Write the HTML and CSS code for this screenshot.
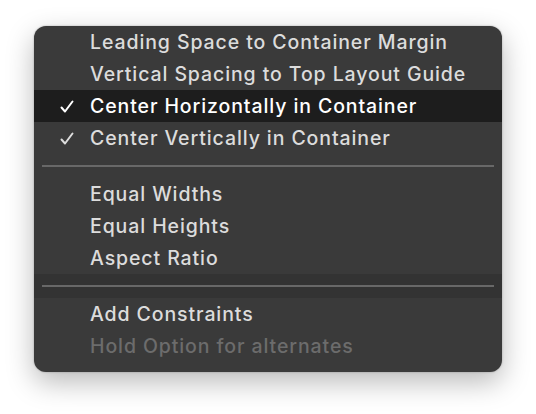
FILE: index.html
```html
<!DOCTYPE html>
<html>
<head>
<meta charset="utf-8">
<link rel="stylesheet" href="styles.css">
</head>
<body>
<div class="page">
  <div class="menu">
    <div class="item"><span class="mark"></span><span class="label">Leading Space to Container Margin</span></div>
    <div class="item"><span class="mark"></span><span class="label">Vertical Spacing to Top Layout Guide</span></div>
    <div class="item active"><span class="mark"><svg width="14" height="14" viewBox="0 0 14 14"><path d="M1.5 7.5 L5 11.5 L12.5 1.5" fill="none" stroke="currentColor" stroke-width="2" stroke-linecap="round" stroke-linejoin="round"/></svg></span><span class="label">Center Horizontally in Container</span></div>
    <div class="item"><span class="mark"><svg width="14" height="14" viewBox="0 0 14 14"><path d="M1.5 7.5 L5 11.5 L12.5 1.5" fill="none" stroke="currentColor" stroke-width="2" stroke-linecap="round" stroke-linejoin="round"/></svg></span><span class="label">Center Vertically in Container</span></div>
    <div class="sep"></div>
    <div class="item"><span class="mark"></span><span class="label">Equal Widths</span></div>
    <div class="item"><span class="mark"></span><span class="label">Equal Heights</span></div>
    <div class="item"><span class="mark"></span><span class="label">Aspect Ratio</span></div>
    <div class="sep dark"></div>
    <div class="item"><span class="mark"></span><span class="label">Add Constraints</span></div>
    <div class="item disabled"><span class="mark"></span><span class="label">Hold Option for alternates</span></div>
  </div>
</div>
</body>
</html>
```
FILE: styles.css
```css
html, body {
  margin: 0;
  padding: 0;
  background: #ffffff;
}
.page {
  width: 536px;
  height: 414px;
  padding: 26px 0 0 34px;
  box-sizing: border-box;
}
.menu {
  width: 468px;
  height: 346px;
  box-sizing: border-box;
  background: #3a3a3a;
  border-radius: 12px;
  box-shadow: 0 10px 28px rgba(0,0,0,0.28), 0 0 2px rgba(0,0,0,0.3);
  overflow: hidden;
  display: flex;
  flex-direction: column;
  font-family: Inter, "Liberation Sans", Arial, sans-serif;
  font-size: 19.5px;
  font-weight: 500;
  letter-spacing: 0.9px;
  color: #dcdcdc;
}
.item {
  height: 32px;
  display: flex;
  align-items: center;
}
.mark {
  width: 56px;
  display: flex;
  justify-content: flex-end;
  padding-right: 16px;
  box-sizing: border-box;
  padding-top: 2px;
}
.label {
  white-space: nowrap;
}
.item.active {
  background: #1d1d1d;
  color: #ffffff;
}
.item.disabled {
  color: #6c6c6c;
}
.sep {
  height: 24px;
  display: flex;
  align-items: center;
  padding: 0 8px;
}
.sep::before {
  content: "";
  flex: 1;
  height: 2px;
  background: #686868;
}
.sep.dark {
  background: #333333;
}
```
